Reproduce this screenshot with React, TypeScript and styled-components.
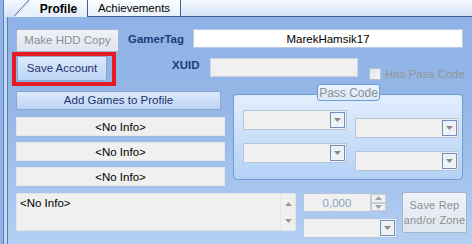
import React from "react";
import styled, { createGlobalStyle } from "styled-components";

const Global = createGlobalStyle`
  html, body { margin: 0; padding: 0; }
  body { font-family: "Liberation Sans", Arial, sans-serif; font-size: 11px; }
  #root { width: 472px; height: 244px; overflow: hidden; }
  #root * { flex-shrink: 0; }
`;

const Page = styled.div`
  width: 472px;
  height: 244px;
  display: flex;
  flex-direction: column;
  background: #91b4e6;
  overflow: hidden;
`;

const TabStrip = styled.div`
  height: 17px;
  display: flex;
  align-items: flex-end;
  background: linear-gradient(#f6f9fe, #d3e3f7);
  border-left: 1px solid #5c7fb5;
  margin-left: 3px;
  padding-left: 10px;
`;

const Tab = styled.div<{ $active?: boolean; $w: number }>`
  width: ${(p) => p.$w}px;
  height: 17px;
  box-sizing: border-box;
  display: flex;
  align-items: center;
  justify-content: center;
  color: #000;
  font-size: ${(p) => (p.$active ? "12px" : "11.5px")};
  font-weight: ${(p) => (p.$active ? 700 : 400)};
  border-right: 1px solid #3f5f95;
  border-bottom: ${(p) => (p.$active ? "none" : "1px solid #3f5f95")};
  background: ${(p) => (p.$active ? "linear-gradient(#f8fbff, #e3edf9)" : "linear-gradient(#fbfdff, #eaf1fa)")};
`;

const TabSlant = styled.svg`
  display: block;
  width: 16px;
  height: 17px;
`;

const TabFill = styled.div`
  flex: 1 1 auto;
  height: 17px;
  box-sizing: border-box;
  border-bottom: 1px solid #3f5f95;
`;

const Body = styled.div`
  flex: 1 1 auto;
  display: flex;
`;

const LeftFrame = styled.div`
  width: 3px;
  margin-left: 3px;
  border-left: 1px solid #5c7fb5;
  border-right: 1px solid #5c7fb5;
  background: #c4d8f3;
`;

const Panel = styled.div`
  flex: 1 1 auto;
  display: flex;
  flex-direction: column;
  padding: 12px 9px 0 8px;
  background: linear-gradient(#8fb3e6, #94b7e7 40%, #b3cff3);
`;

const Row = styled.div<{ $h: number }>`
  display: flex;
  align-items: flex-start;
  height: ${(p) => p.$h}px;
`;

const Button = styled.button<{ $w: number; $h: number }>`
  width: ${(p) => p.$w}px;
  height: ${(p) => p.$h}px;
  box-sizing: border-box;
  padding: 0;
  margin: 0;
  font-family: "Liberation Sans", Arial, sans-serif;
  font-size: 11.5px;
  color: #1d346c;
  border: 1px solid #8ea6c9;
  border-radius: 2px;
  background: linear-gradient(#dce9fb, #bcd5f6);
  line-height: 13px;
  white-space: nowrap;
  &:disabled {
    color: #8e8e8e;
    border-color: #a5b5cc;
    background: linear-gradient(#eef2f8, #dfe6f0);
  }
`;

const Label = styled.span<{ $ml: number; $mt: number; $w: number }>`
  width: ${(p) => p.$w}px;
  margin-left: ${(p) => p.$ml}px;
  margin-top: ${(p) => p.$mt}px;
  font-weight: 700;
  font-size: 11.5px;
  color: #1e3c7c;
  line-height: 13px;
  white-space: nowrap;
`;

const TextBox = styled.div<{ $w: number; $mt?: number; $disabled?: boolean }>`
  width: ${(p) => p.$w}px;
  height: 19px;
  margin-top: ${(p) => p.$mt ?? 0}px;
  box-sizing: border-box;
  border: 1px solid ${(p) => (p.$disabled ? "#c9d4e3" : "#b9cbe4")};
  background: ${(p) => (p.$disabled ? "#f0f0f0" : "#fff")};
  display: flex;
  align-items: center;
  justify-content: center;
  font-size: 11.5px;
  color: #000;
`;

const SaveWrap = styled.div`
  position: relative;
  margin-top: 4px;
  margin-left: 1px;
  width: 90px;
  height: 25px;
`;

const Highlight = styled.div`
  position: absolute;
  left: -5px;
  top: -4px;
  width: 104px;
  height: 34px;
  box-sizing: border-box;
  border: 4px solid #e61c24;
  pointer-events: none;
`;

const Check = styled.div`
  display: flex;
  align-items: center;
  margin-left: 11px;
  margin-top: 16px;
  color: #949494;
  font-size: 11.5px;
  gap: 4px;
  white-space: nowrap;
`;

const CheckBox = styled.div`
  width: 12px;
  height: 12px;
  box-sizing: border-box;
  border: 1px solid #b6bfcc;
  background: linear-gradient(135deg, #dfe3e8, #f7f8fa);
`;

const Middle = styled.div`
  display: flex;
  align-items: flex-start;
`;

const LeftCol = styled.div`
  width: 209px;
  display: flex;
  flex-direction: column;
  gap: 6px;
`;

const InfoRow = styled.div<{ $mt?: number }>`
  height: 19px;
  margin-top: ${(p) => p.$mt ?? 0}px;
  box-sizing: border-box;
  background: #f0f0f0;
  border: 1px solid #e6e6e6;
  display: flex;
  align-items: center;
  justify-content: center;
  font-size: 11.5px;
  color: #000;
`;

const Group = styled.div`
  position: relative;
  margin-left: 8px;
  margin-top: 3px;
  width: 230px;
  height: 86px;
  box-sizing: border-box;
  border: 1px solid #6e9ad6;
  border-radius: 4px;
  background: linear-gradient(#e2eefd, #b4d1f6);
  display: grid;
  grid-template-columns: 104px 104px;
  column-gap: 8px;
  padding: 15px 0 0 9px;
`;

const GroupTitle = styled.div`
  position: absolute;
  left: 83px;
  top: -11px;
  height: 17px;
  width: 63px;
  box-sizing: border-box;
  border: 1px solid #6e9ad6;
  border-radius: 3px;
  background: linear-gradient(#eaf2fd, #dce9fb);
  color: #8e8e8e;
  font-size: 12px;
  display: flex;
  align-items: center;
  justify-content: center;
`;

const ComboCol = styled.div<{ $mt: number }>`
  display: flex;
  flex-direction: column;
  gap: 13px;
  margin-top: ${(p) => p.$mt}px;
`;

const Combo = styled.div<{ $w: number }>`
  width: ${(p) => p.$w}px;
  height: 20px;
  box-sizing: border-box;
  border: 1px solid #b8c6da;
  background: #f0f0f0;
  display: flex;
  justify-content: flex-end;
  padding: 1px;
`;

const ComboBtn = styled.div`
  width: 15px;
  box-sizing: border-box;
  border: 1px solid #6f8fbf;
  background: #eef1f5;
  display: flex;
  align-items: center;
  justify-content: center;
`;

const Bottom = styled.div`
  display: flex;
  margin-top: 7px;
  align-items: flex-start;
`;

const TextArea = styled.div`
  width: 280px;
  height: 38px;
  box-sizing: border-box;
  background: #f0f0f0;
  border: 1px solid #e3e3e3;
  display: flex;
  font-size: 11.5px;
  color: #000;
`;

const AreaText = styled.div`
  flex: 1 1 auto;
  padding: 2px 0 0 3px;
  line-height: 14px;
`;

const ScrollBar = styled.div`
  width: 14px;
  border-left: 1px solid #e6e6e6;
  display: flex;
  flex-direction: column;
  justify-content: space-between;
  align-items: center;
  padding: 8px 0 7px;
`;

const Stack = styled.div`
  display: flex;
  flex-direction: column;
  gap: 6px;
  margin-left: 7px;
`;

const Numeric = styled.div`
  width: 84px;
  height: 19px;
  box-sizing: border-box;
  border: 1px solid #b8c6da;
  background: #f0f0f0;
  display: flex;
`;

const NumText = styled.div`
  flex: 1 1 auto;
  display: flex;
  align-items: center;
  justify-content: center;
  color: #8ea2c3;
  font-size: 11.5px;
`;

const Spin = styled.div`
  width: 15px;
  display: flex;
  flex-direction: column;
  border-left: 1px solid #c9cfd8;
`;

const SpinBtn = styled.div`
  flex: 1 1 auto;
  display: flex;
  align-items: center;
  justify-content: center;
  border: 1px solid #c7ccd4;
  background: #eef0f3;
`;

const SaveRep = styled(Button)`
  margin-left: 5px;
  margin-top: -1px;
  line-height: 15px;
  font-size: 11px;
  letter-spacing: 0.2px;
`;

const Tri = ({ up, color = "#8a8a8a" }: { up?: boolean; color?: string }) => (
  <svg width="7" height="4" viewBox="0 0 7 4">
    <path d={up ? "M0 4 L3.5 0 L7 4 Z" : "M0 0 L7 0 L3.5 4 Z"} fill={color} />
  </svg>
);

const ComboBox = ({ w }: { w: number }) => (
  <Combo $w={w}>
    <ComboBtn>
      <Tri />
    </ComboBtn>
  </Combo>
);

export default function App() {
  return (
    <>
      <Global />
      <Page>
        <TabStrip>
          <TabSlant viewBox="0 0 16 17">
            <path d="M15 0 L16 0 L16 17 L0 17 Z" fill="#eaf1fa" />
            <path d="M0 16.5 L15 0" stroke="#4a6aa0" strokeWidth="1" fill="none" />
          </TabSlant>
          <Tab $active $w={58}>Profile</Tab>
          <Tab $w={93}>Achievements</Tab>
          <TabFill />
        </TabStrip>
        <Body>
          <LeftFrame />
          <Panel>
            <Row $h={23}>
              <Button disabled $w={103} $h={23}>Make HDD Copy</Button>
              <Label $ml={9} $mt={4} $w={65}>GamerTag</Label>
              <TextBox $w={270}>MarekHamsik17</TextBox>
            </Row>
            <Row $h={39}>
              <SaveWrap>
                <Button $w={90} $h={25}>Save Account</Button>
                <Highlight />
              </SaveWrap>
              <Label $ml={65} $mt={7} $w={38}>XUID</Label>
              <TextBox $w={148} $mt={6} $disabled />
              <Check>
                <CheckBox />
                <span>Has Pass Code</span>
              </Check>
            </Row>
            <Middle>
              <LeftCol>
                <Button $w={205} $h={19}>Add Games to Profile</Button>
                <InfoRow $mt={1}>&lt;No Info&gt;</InfoRow>
                <InfoRow>&lt;No Info&gt;</InfoRow>
                <InfoRow>&lt;No Info&gt;</InfoRow>
              </LeftCol>
              <Group>
                <GroupTitle>Pass Code</GroupTitle>
                <ComboCol $mt={0}>
                  <ComboBox w={104} />
                  <ComboBox w={104} />
                </ComboCol>
                <ComboCol $mt={8}>
                  <ComboBox w={104} />
                  <ComboBox w={104} />
                </ComboCol>
              </Group>
            </Middle>
            <Bottom>
              <TextArea>
                <AreaText>&lt;No Info&gt;</AreaText>
                <ScrollBar>
                  <Tri up color="#9a9a9a" />
                  <Tri color="#9a9a9a" />
                </ScrollBar>
              </TextArea>
              <Stack>
                <Numeric>
                  <NumText>0,000</NumText>
                  <Spin>
                    <SpinBtn><Tri up color="#a0a0a0" /></SpinBtn>
                    <SpinBtn><Tri color="#a0a0a0" /></SpinBtn>
                  </Spin>
                </Numeric>
                <ComboBox w={94} />
              </Stack>
              <SaveRep disabled $w={65} $h={41}>Save Rep<br />and/or Zone</SaveRep>
            </Bottom>
          </Panel>
        </Body>
      </Page>
    </>
  );
}
